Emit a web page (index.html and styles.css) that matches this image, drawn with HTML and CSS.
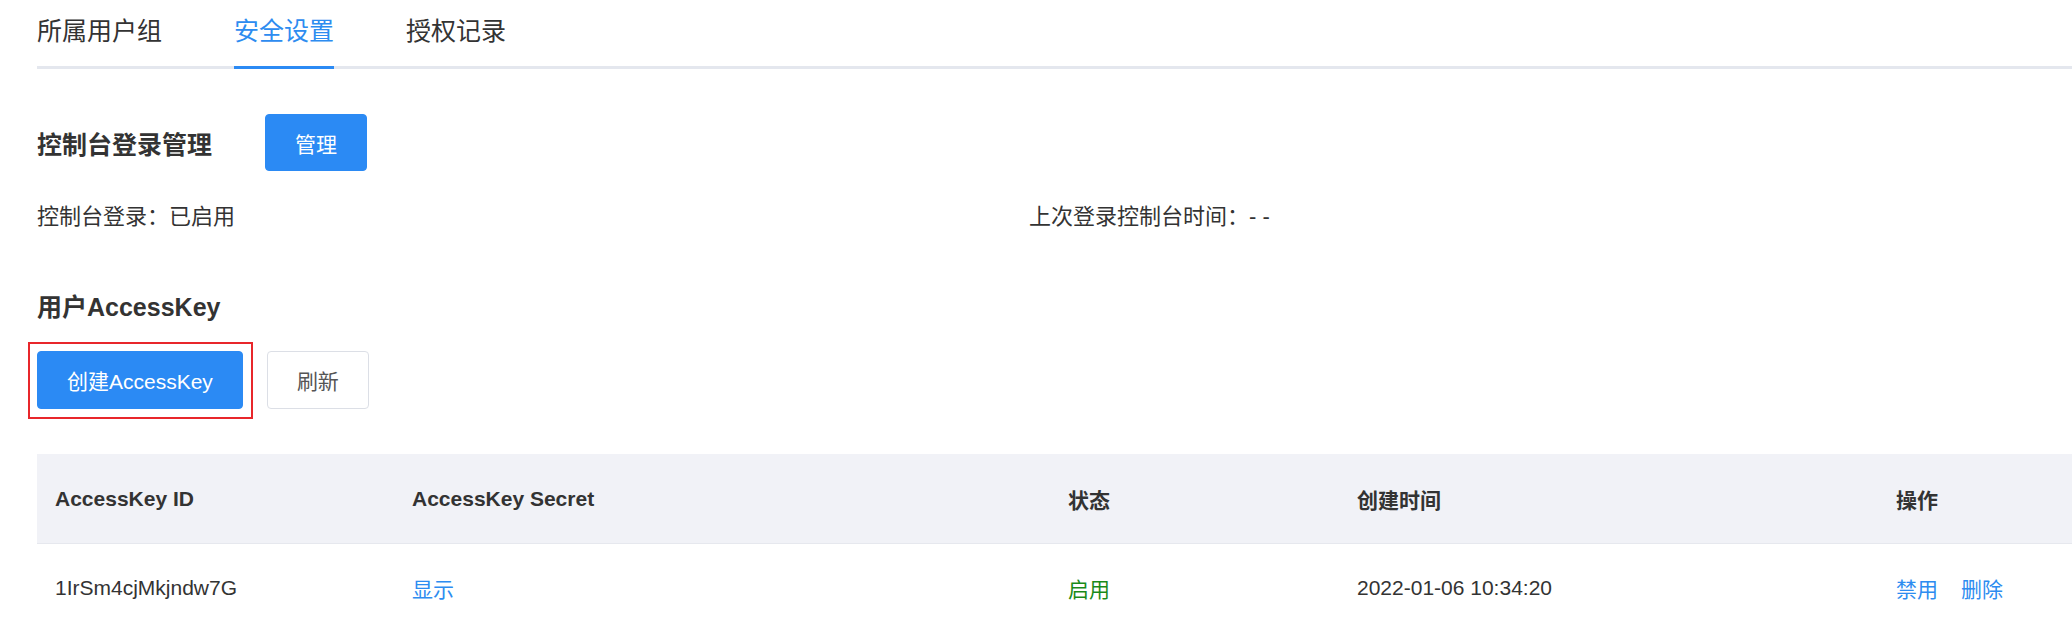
FILE: index.html
```html
<!DOCTYPE html>
<html lang="zh-CN">
<head>
    <meta charset="UTF-8">
    <meta name="viewport" content="width=device-width, initial-scale=1.0">
    <title>安全设置</title>
    <link rel="stylesheet" href="styles.css">
</head>
<body>
    <div class="page">
        <div class="tabs">
            <div class="tab">所属用户组</div>
            <div class="tab active">安全设置</div>
            <div class="tab">授权记录</div>
        </div>

        <div class="section-head">
            <h3>控制台登录管理</h3>
            <button class="btn btn-primary">管理</button>
        </div>

        <div class="info-row">
            <div>控制台登录：已启用</div>
            <div>上次登录控制台时间：- -</div>
        </div>

        <h3 class="ak-title">用户AccessKey</h3>

        <div class="toolbar">
            <span class="marked">
                <button class="btn btn-primary">创建AccessKey</button>
            </span>
            <button class="btn btn-default">刷新</button>
        </div>

        <table class="ak-table">
            <colgroup>
                <col class="c1">
                <col class="c2">
                <col class="c3">
                <col class="c4">
                <col class="c5">
            </colgroup>
            <thead>
                <tr>
                    <th>AccessKey ID</th>
                    <th>AccessKey Secret</th>
                    <th>状态</th>
                    <th>创建时间</th>
                    <th>操作</th>
                </tr>
            </thead>
            <tbody>
                <tr>
                    <td>1IrSm4cjMkjndw7G</td>
                    <td><a class="link">显示</a></td>
                    <td class="status-on">启用</td>
                    <td>2022-01-06 10:34:20</td>
                    <td><a class="link">禁用</a><a class="link">删除</a></td>
                </tr>
            </tbody>
        </table>
    </div>
</body>
</html>
```

FILE: styles.css
```css
body {
    margin: 0;
    font-family: "Liberation Sans", "Noto Sans CJK SC", sans-serif;
    color: #333;
    background: #fff;
}

.page {
    padding-left: 37px;
}

.tabs {
    display: flex;
    border-bottom: 3px solid #e4e7ee;
}

.tab {
    font-size: 25px;
    line-height: 38px;
    padding: 12px 0 16px;
    margin-right: 72px;
    color: #333;
}

.tab.active {
    color: #2d8cf0;
    border-bottom: 3px solid #2b8af4;
    margin-bottom: -3px;
}

h3 {
    margin: 0;
    font-size: 25px;
    font-weight: bold;
    color: #333;
}

.section-head {
    display: flex;
    align-items: center;
    gap: 53px;
    margin-top: 45px;
}

.btn {
    font-family: inherit;
    font-size: 21px;
    height: 58px;
    padding: 0 29px;
    border-radius: 4px;
    cursor: pointer;
}

.btn-primary {
    background: #2b8af4;
    border: 1px solid #2b8af4;
    color: #fff;
}

.btn-default {
    background: #fff;
    border: 1px solid #dcdfe6;
    color: #555;
}

.section-head .btn {
    height: 57px;
}

.info-row {
    display: grid;
    grid-template-columns: 992px 1fr;
    font-size: 22px;
    line-height: 30px;
    margin-top: 31px;
}

.ak-title {
    line-height: 34px;
    margin-top: 58px;
}

.toolbar {
    display: flex;
    gap: 24px;
    margin-top: 27px;
}

/* red annotation box around the create button */
.marked {
    position: relative;
    display: flex;
}

.marked::after {
    content: "";
    position: absolute;
    top: -9px;
    left: -9px;
    right: -10px;
    bottom: -10px;
    border: 2px solid #e8262b;
    pointer-events: none;
}

.ak-table {
    width: 2035px;
    table-layout: fixed;
    border-collapse: collapse;
    margin-top: 45px;
    font-size: 21px;
}

.c1 { width: 357px; }
.c2 { width: 656px; }
.c3 { width: 289px; }
.c4 { width: 539px; }
.c5 { width: 194px; }

.ak-table th {
    background: #f1f2f7;
    height: 89px;
    text-align: left;
    padding: 0 18px;
    font-weight: bold;
    color: #333;
    border-bottom: 1px solid #e6e8ee;
}

.ak-table td {
    height: 88px;
    padding: 0 18px;
    color: #333;
}

.ak-table td.status-on {
    color: #198a19;
}

.link {
    color: #2d8cf0;
    cursor: pointer;
}

.link + .link {
    margin-left: 23px;
}
```
